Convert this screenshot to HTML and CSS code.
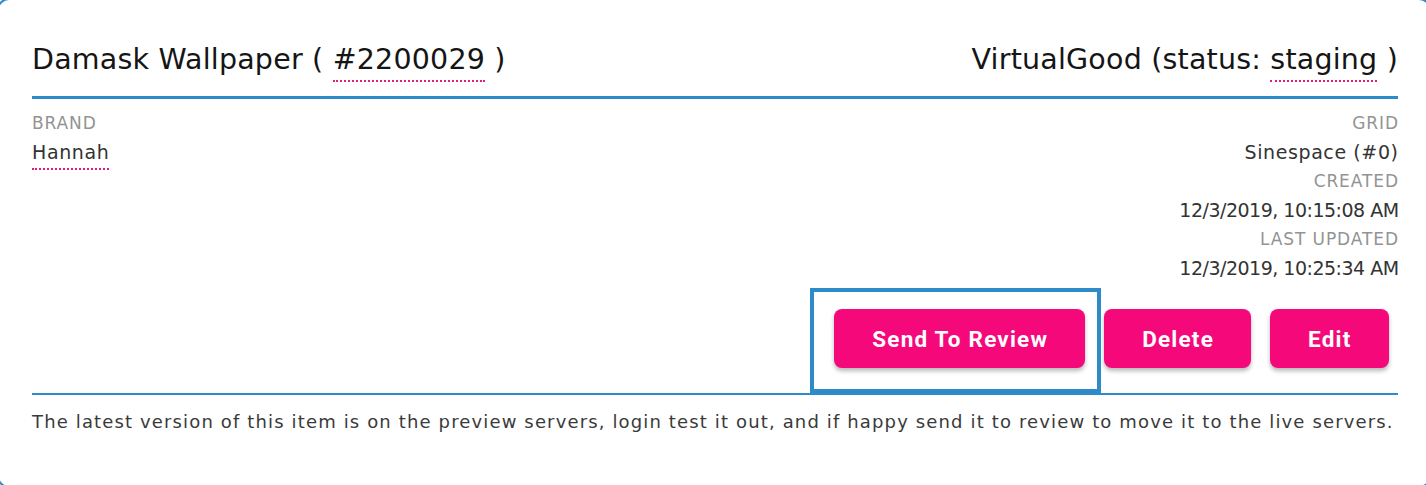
FILE: index.html
```html
<!DOCTYPE html>
<html lang="en">
<head>
<meta charset="utf-8">
<title>Damask Wallpaper</title>
<link rel="stylesheet" href="styles.css">
</head>
<body>
<div class="frame"></div>
<main class="card">
  <header class="head">
    <h1 class="title">Damask Wallpaper ( <span class="dotted">#2200029</span> )</h1>
    <h2 class="title">VirtualGood (status: <span class="dotted">staging</span> )</h2>
  </header>
  <section class="info">
    <div class="col">
      <div class="label">BRAND</div>
      <div class="value"><span class="dotted small">Hannah</span></div>
    </div>
    <div class="col right">
      <div class="label">GRID</div>
      <div class="value">Sinespace (#0)</div>
      <div class="label">CREATED</div>
      <div class="value date">12/3/2019, 10:15:08 AM</div>
      <div class="label">LAST UPDATED</div>
      <div class="value date">12/3/2019, 10:25:34 AM</div>
    </div>
  </section>
  <div class="actions">
    <div class="highlight-wrap">
      <button class="btn">Send To Review</button>
      <div class="highlight"></div>
    </div>
    <button class="btn">Delete</button>
    <button class="btn">Edit</button>
  </div>
  <p class="note">The latest version of this item is on the preview servers, login test it out, and if happy send it to review to move it to the live servers.</p>
</main>
</body>
</html>
```
FILE: styles.css
```css
html, body {
  margin: 0;
  padding: 0;
  background: #fff;
}
body {
  font-family: "DejaVu Sans", Inter, sans-serif;
  color: #222;
  position: relative;
  min-height: 485px;
  overflow: hidden;
}
.frame {
  position: absolute;
  left: -3px;
  top: -2px;
  right: -5px;
  height: 490px;
  box-sizing: border-box;
  border: 2px solid #2e8bc9;
  border-radius: 12px;
  pointer-events: none;
}
.card {
  padding: 0 28px 0 32px;
}
.head {
  display: flex;
  justify-content: space-between;
  padding-top: 42px;
  padding-bottom: 18px;
  border-bottom: 3px solid #2e8bc9;
}
.title {
  margin: 0;
  font-size: 28.5px;
  line-height: 36px;
  font-weight: 400;
  letter-spacing: 0.2px;
  color: #151515;
}
.dotted {
  border-bottom: 2px dotted #e6197c;
  padding-bottom: 4px;
}
.dotted.small {
  padding-bottom: 5px;
}
.info {
  display: flex;
  justify-content: space-between;
  padding-top: 10px;
}
.col.right {
  text-align: right;
}
.label {
  font-size: 17px;
  line-height: 29px;
  letter-spacing: 0.9px;
  color: #939393;
}
.col.right .label {
  margin-right: -0.9px;
}
.value {
  font-size: 19px;
  line-height: 29px;
  letter-spacing: 0.6px;
  color: #333;
}
.col.right .value {
  margin-right: -0.6px;
}
.value.date {
  letter-spacing: -0.5px;
  margin-right: 0.5px;
}
.actions {
  display: flex;
  justify-content: flex-end;
  padding: 26px 0 25px;
  border-bottom: 2px solid #2e8bc9;
}
.highlight-wrap {
  position: relative;
  display: flex;
}
.btn {
  font-family: Roboto, sans-serif;
  font-weight: 700;
  font-size: 22.5px;
  letter-spacing: 1.2px;
  color: #fff;
  background: #f5087a;
  border: none;
  border-radius: 8px;
  height: 59px;
  padding: 0 37px 0 38px;
  margin: 0 9.5px;
  box-shadow: 0 3px 4px rgba(0, 0, 0, 0.28);
}
.highlight {
  position: absolute;
  left: -15px;
  top: -21px;
  width: 283px;
  height: 97px;
  border: 4px solid #2e8bc9;
  pointer-events: none;
}
.note {
  margin: 0;
  padding-top: 13px;
  font-size: 18px;
  line-height: 28px;
  letter-spacing: 1.14px;
  color: #3a3a3a;
}
```
